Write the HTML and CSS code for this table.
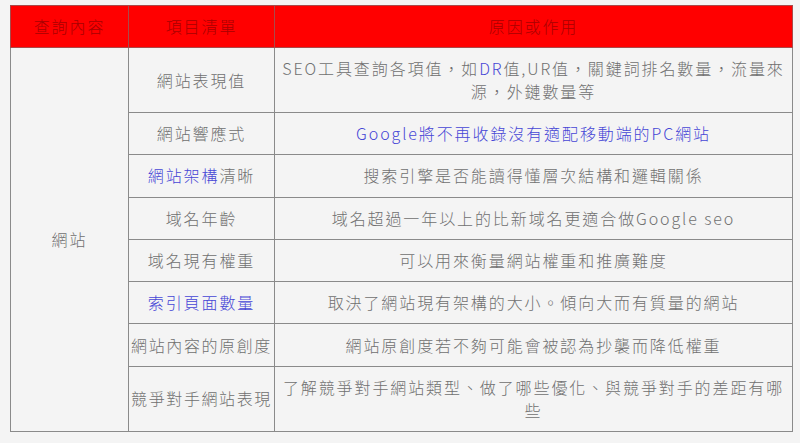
FILE: index.html
```html
<!DOCTYPE html>
<html lang="zh-Hant">
<head>
<meta charset="utf-8">
<link rel="stylesheet" href="styles.css">
</head>
<body>
<table class="seo-table">
  <colgroup>
    <col class="c1"><col class="c2"><col class="c3">
  </colgroup>
  <thead>
    <tr class="head">
      <th>查詢內容</th><th>項目清單</th><th>原因或作用</th>
    </tr>
  </thead>
  <tbody>
    <tr class="tall">
      <td rowspan="8" class="group">網站</td>
      <td>網站表現值</td>
      <td>SEO工具查詢各項值，如<span class="link">DR</span>值,UR值，關鍵詞排名數量，流量來源，外鏈數量等</td>
    </tr>
    <tr><td>網站響應式</td><td class="link">Google將不再收錄沒有適配移動端的PC網站</td></tr>
    <tr><td><span class="link">網站架構</span>清晰</td><td>搜索引擎是否能讀得懂層次結構和邏輯關係</td></tr>
    <tr><td>域名年齡</td><td>域名超過一年以上的比新域名更適合做Google seo</td></tr>
    <tr><td>域名現有權重</td><td>可以用來衡量網站權重和推廣難度</td></tr>
    <tr><td class="link">索引頁面數量</td><td>取決了網站現有架構的大小。傾向大而有質量的網站</td></tr>
    <tr><td class="tight">網站內容的原創度</td><td>網站原創度若不夠可能會被認為抄襲而降低權重</td></tr>
    <tr class="tall"><td class="tight">競爭對手網站表現</td><td>了解競爭對手網站類型、做了哪些優化、與競爭對手的差距有哪些</td></tr>
  </tbody>
</table>
</body>
</html>
```

FILE: styles.css
```css
html, body {
  margin: 0;
  background: #f4f4f4;
}
body {
  padding: 5px 0 0 10px;
  font-family: "Noto Sans CJK TC", "Noto Sans", sans-serif;
  font-size: 16px;
  color: #707070;
}
.seo-table {
  border-collapse: collapse;
  width: 782px;
  table-layout: fixed;
  border: 1px solid #8a8a8a;
}
.c1 { width: 118px; }
.c2 { width: 146px; }
.c3 { width: 518px; }
.seo-table th,
.seo-table td {
  text-align: center;
  vertical-align: middle;
  padding: 0 3px;
  letter-spacing: 1.9px;
  line-height: 23px;
  font-weight: 300;
}
.seo-table td {
  border: 1px solid #8a8a8a;
  height: 41.3px;
}
.seo-table th {
  background: #ff0000;
  color: #a80000;
  border: 1px solid #a94a4a;
  height: 41px;
  font-weight: 300;
}
.seo-table tr.tall td { height: 64px; }
.seo-table td.group { height: auto; }
.seo-table td.tight { padding: 0; letter-spacing: 1.6px; }
.link { color: #4646d6; }
```
